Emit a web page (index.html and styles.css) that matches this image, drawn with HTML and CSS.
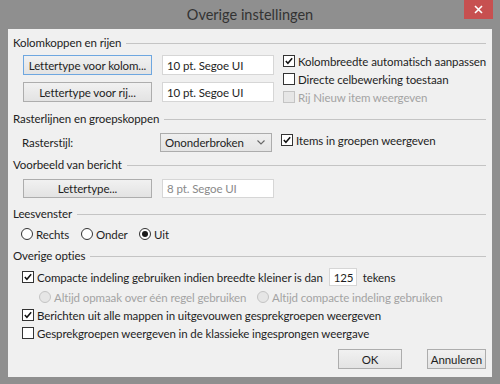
FILE: index.html
```html
<!DOCTYPE html>
<html>
<head>
<meta charset="utf-8">
<link rel="stylesheet" href="styles.css">
</head>
<body>
<div class="window">
  <div class="titlebar">
    <span></span>
    <span class="title">Overige instellingen</span>
    <span class="close"><svg width="9" height="9" viewBox="0 0 9 9"><path d="M1 1L8 8M8 1L1 8" stroke="#fff" stroke-width="1.6"/></svg></span>
  </div>
  <div class="content">
    <div class="group g1"><span>Kolomkoppen en rijen</span><i></i></div>
    <div class="sec1">
      <div class="leftcol">
        <div class="frow">
          <span class="btn focus">Lettertype voor kolom...</span>
          <span class="input">10 pt. Segoe UI</span>
        </div>
        <div class="frow">
          <span class="btn">Lettertype voor rij...</span>
          <span class="input">10 pt. Segoe UI</span>
        </div>
      </div>
      <div class="rightcol">
        <div class="crow"><span class="cb"><svg viewBox="0 0 11 11"><path d="M2 5.5L4.3 8L9 2.5"/></svg></span>Kolombreedte automatisch aanpassen</div>
        <div class="crow"><span class="cb"></span>Directe celbewerking toestaan</div>
        <div class="crow disabled"><span class="cb"></span>Rij Nieuw item weergeven</div>
      </div>
    </div>

    <div class="group g2"><span>Rasterlijnen en groepskoppen</span><i></i></div>
    <div class="sec2">
      <span class="lbl">Rasterstijl:</span>
      <span class="select">Ononderbroken<svg width="8" height="5" viewBox="0 0 8 5"><path d="M0.5 0.5L4 4L7.5 0.5" fill="none" stroke="#666" stroke-width="1.1"/></svg></span>
      <div class="crow up"><span class="cb"><svg viewBox="0 0 11 11"><path d="M2 5.5L4.3 8L9 2.5"/></svg></span>Items in groepen weergeven</div>
    </div>

    <div class="group g3"><span>Voorbeeld van bericht</span><i></i></div>
    <div class="sec3">
      <span class="btn">Lettertype...</span>
      <span class="input grey">8 pt. Segoe UI</span>
    </div>

    <div class="group g4"><span>Leesvenster</span><i></i></div>
    <div class="radios">
      <div class="ritem r1"><span class="rb"></span>Rechts</div>
      <div class="ritem r2"><span class="rb"></span>Onder</div>
      <div class="ritem"><span class="rb on"></span>Uit</div>
    </div>

    <div class="group g5"><span>Overige opties</span><i></i></div>
    <div class="opts">
      <div class="crow o1"><span class="cb"><svg viewBox="0 0 11 11"><path d="M2 5.5L4.3 8L9 2.5"/></svg></span>Compacte indeling gebruiken indien breedte kleiner is dan <span class="num">125</span> tekens</div>
      <div class="subradios">
        <div class="ritem disabled s1"><span class="rb"></span>Altijd opmaak over één regel gebruiken</div>
        <div class="ritem disabled"><span class="rb"></span>Altijd compacte indeling gebruiken</div>
      </div>
      <div class="crow"><span class="cb"><svg viewBox="0 0 11 11"><path d="M2 5.5L4.3 8L9 2.5"/></svg></span>Berichten uit alle mappen in uitgevouwen gesprekgroepen weergeven</div>
      <div class="crow"><span class="cb"></span>Gesprekgroepen weergeven in de klassieke ingesprongen weergave</div>
    </div>

    <div class="actions">
      <span class="btn ok">OK</span>
      <span class="btn cancel">Annuleren</span>
    </div>
  </div>
</div>
</body>
</html>
```
FILE: styles.css
```css
* { box-sizing: border-box; }
html, body { margin: 0; padding: 0; }
body {
  width: 500px;
  height: 384px;
  overflow: hidden;
  font-family: Lato, "Noto Sans", sans-serif;
  font-size: 11.5px;
  letter-spacing: -0.1px;
  color: #1e1e1e;
}
.window {
  width: 500px;
  height: 384px;
  background: #8f8f8f;
  display: flex;
  flex-direction: column;
}
.titlebar {
  height: 29px;
  display: grid;
  grid-template-columns: 1fr auto 1fr;
  align-items: start;
}
.title {
  font-size: 14.5px;
  letter-spacing: 0;
  color: #333;
  line-height: 29px;
}
.close {
  justify-self: end;
  margin-right: 7px;
  width: 29px;
  height: 19px;
  background: #c75050;
  display: flex;
  align-items: center;
  justify-content: center;
}
.close svg { display: block; }
.content {
  margin: 0 8px 0 8px;
  height: 348px;
  background: #f0f0f0;
  padding: 0 6px 0 5px;
  display: flex;
  flex-direction: column;
}
.group {
  display: flex;
  align-items: center;
  height: 16px;
  line-height: 16px;
  color: #222;
  white-space: nowrap;
}
.group i {
  flex: 1;
  height: 0;
  border-top: 1px solid #c4c4c4;
  margin-left: 5px;
}
.g1 { margin-top: 6px; }
.sec1 {
  height: 60px;
  display: flex;
  padding-left: 10px;
}
.leftcol {
  padding-top: 4px;
  display: flex;
  flex-direction: column;
  gap: 7px;
}
.frow { display: flex; gap: 10px; align-items: center; }
.btn {
  display: flex;
  align-items: center;
  justify-content: center;
  width: 129px;
  height: 20px;
  border: 1px solid #adadad;
  background: linear-gradient(#f1f1f1, #e3e3e3);
  color: #1e1e1e;
  white-space: nowrap;
}
.btn.focus { border-color: #6ea7e0; }
.input {
  display: flex;
  align-items: center;
  width: 112px;
  height: 20px;
  border: 1px solid #d6d6d6;
  background: #fff;
  padding-left: 4px;
  white-space: nowrap;
}
.input.grey { color: #8a8a8a; }
.rightcol {
  padding-top: 1px;
  margin-left: 9px;
  display: flex;
  flex-direction: column;
}
.crow {
  display: flex;
  align-items: center;
  height: 18px;
  white-space: nowrap;
}
.cb {
  width: 12px;
  height: 12px;
  border: 1px solid #333;
  background: #fff;
  margin-right: 3px;
  flex: none;
  display: flex;
}
.cb svg { width: 10px; height: 10px; }
.cb svg path { fill: none; stroke: #111; stroke-width: 1.7; }
.disabled { color: #a3a3a3; }
.disabled .cb, .disabled .rb { border-color: #c4c4c4; background: #e6e6e6; }
.sec2 {
  margin-top: 6px;
  height: 19px;
  display: flex;
  align-items: center;
  padding-left: 9px;
}
.lbl { width: 138px; }
.select {
  width: 112px;
  height: 19px;
  border: 1px solid #acacac;
  background: linear-gradient(#efefef, #e4e4e4);
  display: flex;
  align-items: center;
  justify-content: space-between;
  padding: 0 6px 0 4px;
}
.select svg { display: block; }
.crow.up { margin-left: 9px; margin-bottom: 5px; }
.g3 { margin-top: 5px; }
.sec3 {
  margin-top: 6px;
  display: flex;
  gap: 10px;
  padding-left: 10px;
}
.sec3 .btn, .sec3 .input { height: 19px; }
.g4 { margin-top: 8px; }
.radios {
  margin-top: 3px;
  height: 18px;
  display: flex;
  padding-left: 8px;
}
.ritem {
  display: flex;
  align-items: center;
  height: 18px;
  white-space: nowrap;
}
.r1 { width: 60px; }
.r2 { width: 58px; }
.rb {
  width: 12px;
  height: 12px;
  border-radius: 50%;
  border: 1px solid #333;
  background: #fff;
  margin-right: 3px;
  flex: none;
  display: flex;
  align-items: center;
  justify-content: center;
}
.rb.on::after {
  content: "";
  width: 6px;
  height: 6px;
  border-radius: 50%;
  background: #1a1a1a;
}
.g5 { margin-top: 5px; }
.opts {
  margin-top: 4px;
  padding-left: 9px;
  display: flex;
  flex-direction: column;
}
.o1 { height: 18px; }
.num {
  display: inline-flex;
  align-items: center;
  height: 18px;
  width: 28px;
  border: 1px solid #d6d6d6;
  background: #fff;
  padding-left: 4px;
  margin: 0 6px 0 6px;
}
.subradios {
  margin-top: 2px;
  display: flex;
  padding-left: 17px;
}
.s1 { width: 218px; }
.actions {
  margin-top: 7px;
  display: flex;
  justify-content: flex-end;
  gap: 25px;
}
.btn.ok { width: 64px; height: 20px; }
.btn.cancel { width: 59px; height: 20px; }
```
